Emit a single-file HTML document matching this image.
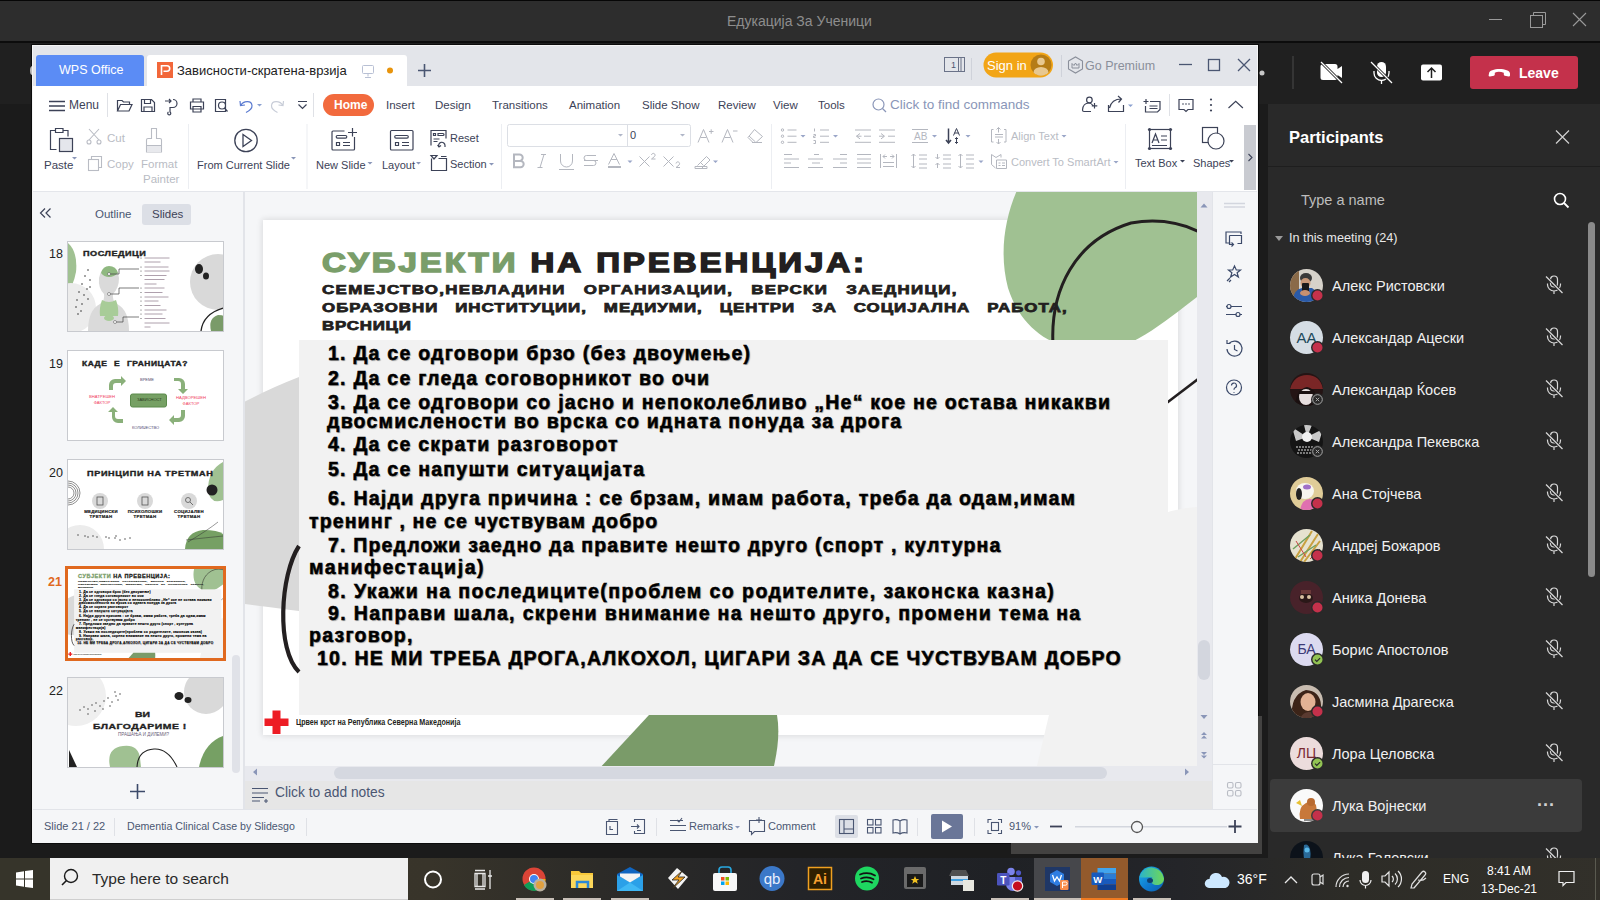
<!DOCTYPE html>
<html><head><meta charset="utf-8">
<style>
*{margin:0;padding:0;box-sizing:border-box}
html,body{width:1600px;height:900px;overflow:hidden;background:#1f1f1f;font-family:"Liberation Sans",sans-serif}
.a{position:absolute}
.t{position:absolute;white-space:nowrap;line-height:1}
svg{position:absolute;overflow:visible}
.li .t{font-size:19.5px;font-weight:bold;color:#000;letter-spacing:1.25px;-webkit-text-stroke:.5px #000;text-shadow:1px 1px 1px rgba(0,0,0,.35)}
#title{left:0;top:0;width:1600px;height:41px;background:#2d2d2d;border-top:1px solid #060606}
#tline{left:0;top:41px;width:1600px;height:2px;background:#0c0c0c}
#stage{left:0;top:43px;width:1600px;height:815px;background:#1b1b1b}
#panel{left:1268px;top:104px;width:332px;height:754px;background:#292929}
#wps{left:32px;top:45px;width:1226px;height:798px;background:#fff;border:1px solid #f4f4f4;overflow:hidden}
#taskbar{left:0;top:858px;width:1600px;height:42px;background:linear-gradient(90deg,#3b372b 0px,#38342a 430px,#2c2b28 600px,#232428 800px,#1f2125 1000px,#242529 1180px,#2d2c27 1350px,#32302a 1600px)}
.nm{color:#f0f0f0;font-size:14.5px}
.av{width:33px;height:33px;border-radius:50%}
.dot{width:12px;height:12px;border-radius:50%;background:#c4314b;border:2px solid #292929}
.ok{width:12px;height:12px;border-radius:50%;background:#6bb700;border:2px solid #292929}
.xs{width:12px;height:12px;border-radius:50%;background:#292929;border:1px solid #9a9a9a}
</style></head><body>
<div id="title" class="a"></div>
<div class="t" style="left:727px;top:14px;font-size:14px;color:#8e8e8e">Едукација За Ученици</div>
<svg style="left:0;top:0" width="1600" height="41">
 <line x1="1489" y1="19.5" x2="1502" y2="19.5" stroke="#9a9a9a" stroke-width="1"/>
 <rect x="1530.5" y="15.5" width="12" height="12" fill="none" stroke="#9a9a9a"/>
 <path d="M1533.5 15.5 V12.5 H1545.5 V24.5 H1542.5" fill="none" stroke="#9a9a9a"/>
 <path d="M1573 13 L1586 26 M1586 13 L1573 26" stroke="#9a9a9a" stroke-width="1.1"/>
</svg>
<div id="tline" class="a"></div>
<div id="stage" class="a"></div>
<div class="a" style="left:0;top:43px;width:1600px;height:61px;background:#202020"></div>
<div class="a" style="left:31px;top:44px;width:1228px;height:800px;background:#0c0c0c"></div>
<div class="a" style="left:30px;top:66px;width:5px;height:9px;border-radius:50%;background:#bdbdbd"></div>
<!-- WPS window -->
<div class="a" style="left:1257px;top:843px;width:5px;height:0px"></div>
<div id="wps" class="a"></div>
<div class="a" style="left:33px;top:46px;width:1224px;height:40px;background:#e3e5ea"></div>
<div class="a" style="left:36px;top:55px;width:108px;height:31px;background:#5b8cf5;border-radius:3px 3px 0 0"></div>
<div class="t" style="left:59px;top:64px;font-size:12.5px;color:#fff">WPS Office</div>
<div class="a" style="left:147px;top:55px;width:260px;height:31px;background:#fff;border-radius:3px 3px 0 0"></div>
<svg style="left:157px;top:62px" width="16" height="16"><rect width="16" height="16" fill="#f2673a"/><path d="M4.5 13 V3.8 H10 a2.7 2.7 0 0 1 0 5.4 H6.5" fill="none" stroke="#fff" stroke-width="1.6"/></svg>
<div class="t" style="left:177px;top:64px;font-size:13px;color:#222">Зависности-скратена-врзија</div>
<svg style="left:0;top:0" width="1600" height="200">
 <rect x="362.5" y="65.5" width="11" height="8" rx="1" fill="none" stroke="#b8c0d4" stroke-width="1"/>
 <path d="M368 73.5 v3 M365 77.5 h6" stroke="#b8c0d4" stroke-width="1"/>
 <circle cx="390" cy="70.5" r="3" fill="#e8940c"/>
 <path d="M424.5 64 v13 M418 70.5 h13" stroke="#4a5672" stroke-width="1.6"/>
 <!-- monitor icon right -->
 <rect x="944.5" y="57.5" width="20" height="14" fill="none" stroke="#6a7288" stroke-width="1"/>
 <text x="951" y="68" font-size="9" fill="#4a5672" font-family="Liberation Sans">1</text>
 <path d="M958.5 58 v13 M961 58 v13" stroke="#6a7288"/>
 <rect x="971" y="58" width="1" height="22" fill="#cfd2da"/>
 <!-- sign in -->
 <rect x="983.5" y="52.5" width="69.5" height="25" rx="12.5" fill="#f2a516"/>
 <circle cx="1041" cy="65" r="10.5" fill="#b57c16"/>
 <circle cx="1041" cy="61.5" r="3.8" fill="#e8c890"/>
 <path d="M1033.5 72.5 a7.5 5.5 0 0 1 15 0 a10.5 10.5 0 0 1-15 0z" fill="#e8c890"/>
 <rect x="1061" y="55" width="1" height="22" fill="#cfd2da"/>
 <path d="M1068.5 61 l7 -4 l7 4 v8 l-7 4 l-7-4z" fill="none" stroke="#8a8f9a" stroke-width="1.1"/>
 <path d="M1072 68 v-4.5 l2 2 l1.5-2.5 l1.5 2.5 l2-2 v4.5z" fill="none" stroke="#8a8f9a" stroke-width="1"/>
 <path d="M1179 64.5 h13" stroke="#4a5672" stroke-width="1.3"/>
 <rect x="1208.5" y="59.5" width="11" height="11" fill="none" stroke="#4a5672" stroke-width="1.3"/>
 <path d="M1238 59 L1250 71 M1250 59 L1238 71" stroke="#4a5672" stroke-width="1.3"/>
</svg>
<div class="t" style="left:987px;top:59px;font-size:13px;color:#fff">Sign in</div>
<div class="t" style="left:1085px;top:60px;font-size:12.5px;color:#8a8f9a">Go Premium</div>
<!-- ribbon -->
<div class="a" style="left:33px;top:86px;width:1224px;height:106px;background:#fff;border-bottom:1px solid #e4e6eb"></div>
<svg style="left:0;top:0" width="1600" height="200">
 <path d="M49 101.5 h16 M49 106 h16 M49 110.5 h16" stroke="#3c4257" stroke-width="1.3"/>
 <rect x="107" y="93" width="1" height="24" fill="#dfe1e6"/>
 <g fill="none" stroke="#3c4257" stroke-width="1.2">
  <path d="M117.5 111 v-10.5 h4.5 l1.5 1.5 h6 v2 M117.5 111 l3-6.5 h11.5 l-3 6.5z"/>
  <path d="M141.5 99.5 h10 l3 3 v9 h-13z M144.5 99.5 v4 h6 v-4 M144 111.5 v-4.5 h8 v4.5"/>
  <path d="M165 101 h6 m-2-2 l2 2 l-2 2 M173 99.5 a4 4 0 0 1 0 8 h-3 v4.5 a1.5 1.5 0 1 1-1.5 0"/>
  <path d="M190.5 102 h13 v7 h-13z M193 102 v-3 h8 v3 M193 106.5 h8 v5.5 h-8z"/>
  <path d="M215.5 99.5 h10 v12 h-10z M222 105.5 m-3.5 0 a3.5 3.5 0 1 0 7 0 a3.5 3.5 0 1 0-7 0 M224.5 108 l3 3.5"/>
 </g>
 <path d="M240.5 105.5 C243.5 100.5 251.5 100 252 105.5 C252.3 109 249 111 246 112.5 M240 101 l.5 4.5 l4.5-.5" fill="none" stroke="#5a7ad0" stroke-width="1.2"/>
 <path d="M257 104 l2.5 2.5 l2.5-2.5z" fill="#8aa0d0"/>
 <path d="M283 105.5 C280 100.5 272 100 271.5 105.5 C271.2 109 274.5 111 277.5 112.5 M283.5 101 l-.5 4.5 l-4.5-.5" fill="none" stroke="#c8cdd8" stroke-width="1.2"/>
 <path d="M298 101.5 h9 M298.5 104.5 l4 4 l4-4" fill="none" stroke="#3c4257" stroke-width="1.2"/>
 <rect x="313" y="93" width="1" height="24" fill="#dfe1e6"/>
 <rect x="323" y="94" width="51" height="22" rx="11" fill="#f26a3d"/>
 <!-- right icons row -->
<g fill="none" stroke="#3c4257" stroke-width="1.2">
  <circle cx="1089.4" cy="100" r="2.8"/>
  <path d="M1093 105.5 q-2-2.5-4-2.5 q-6 0-6.5 7 q0 1.5 1.5 1.5 h7 M1094.5 103 v5.5 M1091.8 105.8 h5.5"/>
  <path d="M1108.5 105 v6.5 h15 v-6.5 M1109.5 108 q2-9 12-9 M1118 96 l3.5 3 l-3 3.5"/>
  <path d="M1146 99 v5 M1143.5 101.5 h5 M1150 101.5 h10 v8 l-2.5 2.5 h-12 v-6 M1149.5 106 h8 M1149.5 108.5 h8"/>
  <path d="M1179 99.5 h14 v10 h-5 l-2 2 l-2-2 h-5z"/>
 </g>
 <path d="M1128 104.5 l2.5 2.5 l2.5-2.5z" fill="#8aa0d0"/>
 <rect x="1169" y="94" width="1" height="22" fill="#dfe1e6"/>
 <circle cx="1183" cy="104" r=".8" fill="#3c4257"/><circle cx="1186" cy="104" r=".8" fill="#3c4257"/><circle cx="1189" cy="104" r=".8" fill="#3c4257"/>
 <circle cx="1211" cy="99.5" r="1.1" fill="#3c4257"/><circle cx="1211" cy="105" r="1.1" fill="#3c4257"/><circle cx="1211" cy="110.5" r="1.1" fill="#3c4257"/>
 <path d="M1228.5 108 l7.2-6.7 l7.2 6.7" fill="none" stroke="#3c4257" stroke-width="1.2"/>
 <circle cx="878.5" cy="104.5" r="5.5" fill="none" stroke="#8a96b8" stroke-width="1.2"/>
 <line x1="882.5" y1="108.5" x2="886" y2="112" stroke="#8a96b8" stroke-width="1.3"/>
</svg>
<div class="t" style="left:69px;top:99px;font-size:12px;color:#3c4257">Menu</div>
<div class="t" style="left:334px;top:99px;font-size:12px;font-weight:bold;color:#fff">Home</div>
<div class="t" style="left:386px;top:100px;font-size:11.5px;color:#3c4257">Insert</div>
<div class="t" style="left:435px;top:100px;font-size:11.5px;color:#3c4257">Design</div>
<div class="t" style="left:492px;top:100px;font-size:11.5px;color:#3c4257">Transitions</div>
<div class="t" style="left:569px;top:100px;font-size:11.5px;color:#3c4257">Animation</div>
<div class="t" style="left:642px;top:100px;font-size:11.5px;color:#3c4257">Slide Show</div>
<div class="t" style="left:718px;top:100px;font-size:11.5px;color:#3c4257">Review</div>
<div class="t" style="left:773px;top:100px;font-size:11.5px;color:#3c4257">View</div>
<div class="t" style="left:818px;top:100px;font-size:11.5px;color:#3c4257">Tools</div>
<div class="t" style="left:890px;top:98px;font-size:13.5px;color:#8a96b8">Click to find commands</div>
<!-- ribbon row icons -->
<svg style="left:0;top:0" width="1600" height="200">
 <g fill="none" stroke="#3c4257" stroke-width="1.2">
  <path d="M55.5 130.5 h-5 v19 h6 M63 130.5 h5 v6 M55.5 128.5 h7.5 v4 h-7.5z"/>
  <rect x="59.5" y="138.5" width="13" height="13" fill="#e4e6ec"/>
 </g>
 <g fill="none" stroke="#b9bcc4" stroke-width="1.1">
  <path d="M89 129 l10 11 M99 129 l-10 11"/><circle cx="89" cy="142" r="2"/><circle cx="99" cy="142" r="2"/>
  <rect x="88.5" y="159.5" width="10" height="11"/><path d="M91.5 159.5 v-3 h10 v11 h-3"/>
  <path d="M151.5 128.5 h5 v10 h3.5 a1.5 1.5 0 0 1 1.5 1.5 v12 h-15 v-12 a1.5 1.5 0 0 1 1.5-1.5 h3.5z M146.5 145.5 h15"/>
 </g>
 <rect x="147" y="146" width="14" height="6" fill="#e8e9ed"/>
 <circle cx="246" cy="140.5" r="11.2" fill="none" stroke="#3c4257" stroke-width="1.3"/>
 <path d="M243 134.5 v12 l8.5-6z" fill="none" stroke="#3c4257" stroke-width="1.3"/>
 <rect x="188" y="124" width="1" height="65" fill="#eceef2"/>
 <rect x="306.5" y="124" width="1" height="65" fill="#eceef2"/>
 <g fill="none" stroke="#3c4257" stroke-width="1.2">
  <path d="M344.5 131 h-11.5 a1 1 0 0 0-1 1 v17 a1 1 0 0 0 1 1 h20.5 a1 1 0 0 0 1-1 v-12 M337.5 135.5 h8 a1.3 1.3 0 0 1 0 2.6 h-8 a1.3 1.3 0 0 1 0-2.6z M336.5 142.5 h3 v3 h-3z M343 142.5 h7 M343 145.5 h7 M352.5 128 v8.5 M348 132.5 h9"/>
  <rect x="390.5" y="130.5" width="22.5" height="19.5" rx="1"/>
  <path d="M396 135.5 h11 a1.3 1.3 0 0 1 0 2.6 h-11 a1.3 1.3 0 0 1 0-2.6z M395.5 142.5 h3 v3 h-3z M402 142.5 h7 M402 145.5 h7"/>
  <path d="M431 145.5 v-15 h15 v8 M433.5 133.5 h2 v2 h-2z M438 133.5 h5 a1 1 0 0 1 0 2 h-5z M433.5 139 h6 M433.5 141.5 h4 M439 147 a3.2 3.2 0 1 1 6 -1.5 v1.5 M437.5 145 l1.5 2 l2-1.5"/>
  <path d="M431.5 158.5 v12 h15 v-12 h-8 M441 156.5 h5.5 M431 155.5 h6 l-3 3.5z"/>
 </g>
 <path d="M367.5 162 l2.5 2.5 l2.5-2.5z M416 162 l2.5 2.5 l2.5-2.5z M489 163 l2.5 2.5 l2.5-2.5z M72 157 l2.5 2.5 l2.5-2.5z M291 157 l2.5 2.5 l2.5-2.5z" fill="#8a96b8"/>
 <rect x="501" y="124" width="1" height="65" fill="#eceef2"/>
 <rect x="507.5" y="124.5" width="183" height="22" rx="2" fill="#fff" stroke="#dcdfe5"/>
 <rect x="627" y="125" width="1" height="21" fill="#dcdfe5"/>
 <path d="M618 134 l2.5 2.5 l2.5-2.5z M680 134 l2.5 2.5 l2.5-2.5z" fill="#b0b6c8"/>
<g fill="none" stroke="#b4b7bf" stroke-width="1">
  <path d="M514 154.5 h5.5 a3.2 3.2 0 0 1 0 6.4 h-5.5z M514 160.9 h6.5 a3.2 3.2 0 0 1 0 6.4 h-6.5z" stroke-width="2"/>
  <path d="M541 154.5 h5 M537.5 167.5 h5 M544 154.5 l-4 13"/>
  <path d="M560.5 154 v7 a6 6 0 0 0 12 0 v-7 M559 169.5 h15"/>
  <path d="M596 155.5 h-9.5 a2.5 2.5 0 0 0 0 5 h7 a2.5 2.5 0 0 1 0 5 h-9.5 M584 160.5 h14"/>
  <path d="M608.5 164.5 l5.5-11 l5.5 11 M611 159.5 h6"/><rect x="608" y="166" width="13" height="2" fill="#b4b7bf" stroke="none"/>
  <path d="M639.5 156.5 l10 10 M649.5 156.5 l-10 10 M651.5 155 a1.8 1.8 0 1 1 3 1.5 l-3 2.5 h4"/>
  <path d="M663.5 156.5 l10 10 M673.5 156.5 l-10 10 M676 163.5 a1.8 1.8 0 1 1 3 1.5 l-3 2.5 h4"/>
  <path d="M697.5 165.5 l9-9 l3.5 3.5 l-9 9 M695 166.5 h12 v2 h-12z M700 162 l3.5 3.5"/>
  <path d="M698 142.5 l5.5-13 l5.5 13 M700.5 137.5 h6 M709 131.5 h4.5 M711.2 129.3 v4.5"/>
  <path d="M722 142.5 l5.5-13 l5.5 13 M724.5 137.5 h6 M733 131 h4.5"/>
  <path d="M754.5 129.5 l8 7 l-6.5 6 h-3 l-5-5z M749 136 l6.5 6 M752 142.5 h10"/>
  <circle cx="782.5" cy="130" r="1.2"/><circle cx="782.5" cy="136.2" r="1.2"/><circle cx="782.5" cy="142.3" r="1.2"/>
  <path d="M787.5 130 h9 M787.5 136.2 h9 M787.5 142.3 h9"/>
  <path d="M820 130 h9 M820 136.2 h9 M820 142.3 h9 M814.5 128.5 v3 M813.5 134.5 h2 v1.5 h-2 v1.5 h2 M813.5 140.5 h2 v3 h-2"/>
  <path d="M855 130 h16 M864 136.2 h7 M855 142.3 h16 M860 133.5 l-3.5 2.7 l3.5 2.7 M856.5 136.2 h5"/>
  <path d="M879 130 h16 M888 136.2 h7 M879 142.3 h16 M881 133.5 l3.5 2.7 l-3.5 2.7 M879 136.2 h5"/>
  <path d="M912 129.5 h16 M912 142.5 h16"/>
  <path d="M784 154.5 h8 M784 159 h15 M784 163 h7 M784 167.5 h15"/>
  <path d="M814 154.5 h5 M808 159 h15 M812 163 h8 M808 167.5 h15"/>
  <path d="M840 154.5 h7 M833 159 h14 M840 163 h7 M833 167.5 h14"/>
  <path d="M857 154.5 h14 M857 159 h14 M857 163 h14 M857 167.5 h14"/>
  <path d="M880.5 154 v14 M896.5 154 v14 M883 162.5 h11 M883 166.5 h11 M883 156.5 h4 M890 156.5 h4 M885 154.5 l-2 2 l2 2 M892 154.5 l2 2 l-2 2"/>
  <path d="M913.5 154 v14 M911.5 156 l2-2 l2 2 M911.5 166 l2 2 l2-2 M919 155 h8 M919 159 h8 M919 164 h8 M919 168 h8"/>
  <path d="M937.5 154 v5 M937.5 163 v5 M935.5 157 l2 2 l2-2 M935.5 165 l2-2 l2 2 M943 155 h8 M943 159 h8 M943 164 h8 M943 168 h8"/>
  <path d="M960.5 154 v14 M958.5 156 l2-2 l2 2 M958.5 166 l2 2 l2-2 M966 155 h8 M966 159 h8 M966 164 h8 M966 168 h8"/>
  <path d="M991.5 129.5 h-0 v12.5 M991.5 129.5 h2 M991.5 142 h2 M1006 129.5 v12.5 M1006 129.5 h-2 M1006 142 h-2 M998.5 127.5 v5 M998.5 139 v5 M996.5 129.5 l2-2 l2 2 M996.5 142 l2 2 l2-2 M995 134.5 h8 M995 137 h8"/>
  <path d="M991.5 154.5 v10 l4 3.5 M991.5 154.5 l4.5 3 l5-3 v3 M996.5 160 h10 v8.5 h-10z M998.5 163 h2 M1002 163 h3 M998.5 165.5 h2 M1002 165.5 h3"/>
 </g>
 <path d="M948.5 128.5 v14 M946 140 l2.5 3 l2.5-3" fill="none" stroke="#3c4257" stroke-width="1.5"/>
 <path d="M953.5 135.5 l3-7 l3 7 M954.5 133 h4 M956.5 137.5 v6 M955 139 l1.5-1.5 l1.5 1.5 M955 142 l1.5 1.5 l1.5-1.5" fill="none" stroke="#3c4257" stroke-width="1"/>
 <text x="914" y="140" font-size="10" fill="#b4b7bf" font-family="Liberation Sans">AB</text>
 <rect x="771" y="124" width="1" height="65" fill="#eceef2"/>
 <rect x="906" y="124" width="1" height="0" fill="#eceef2"/>
 <path d="M627.5 160.5 l2.5 2.5 l2.5-2.5z M713 160.5 l2.5 2.5 l2.5-2.5z M800.5 135 l2.5 2.5 l2.5-2.5z M833 135 l2.5 2.5 l2.5-2.5z M932 135 l2.5 2.5 l2.5-2.5z M965.5 135 l2.5 2.5 l2.5-2.5z M978.5 160.5 l2.5 2.5 l2.5-2.5z M1061.5 135 l2.5 2.5 l2.5-2.5z M1113.5 161 l2.5 2.5 l2.5-2.5z" fill="#9aa6c8"/>
 <rect x="1125" y="124" width="1" height="65" fill="#eceef2"/>
 <g fill="none" stroke="#3c4257" stroke-width="1.2">
  <rect x="1149.5" y="129.5" width="21" height="19"/>
  <path d="M1152 143 l3.5-9 l3.5 9 M1153 140 h5 M1161 136 h6 M1161 140 h6 M1152 145.5 h15"/>
  <rect x="1202.5" y="127.5" width="15" height="15"/>
  <circle cx="1216" cy="141" r="8" fill="#fff"/>
 </g>
 <g fill="#3c4257"><circle cx="1149.5" cy="129.5" r="1.6"/><circle cx="1170.5" cy="129.5" r="1.6"/><circle cx="1149.5" cy="148.5" r="1.6"/><circle cx="1170.5" cy="148.5" r="1.6"/></g>
 <path d="M1180 160 l2.5 2.5 l2.5-2.5z M1229 160 l2.5 2.5 l2.5-2.5z" fill="#3c4257"/>
 <rect x="1244" y="125" width="12" height="65" fill="#c9cbd1"/>
 <path d="M1248.5 154 l3.5 3.5 l-3.5 3.5" fill="none" stroke="#3c4257" stroke-width="1.1"/>
</svg>
<div class="t" style="left:44px;top:160px;font-size:11.5px;color:#3c4257">Paste</div>
<div class="t" style="left:107px;top:133px;font-size:11.5px;color:#b9bcc4">Cut</div>
<div class="t" style="left:107px;top:159px;font-size:11.5px;color:#b9bcc4">Copy</div>
<div class="t" style="left:141px;top:159px;font-size:11.5px;color:#b9bcc4">Format</div>
<div class="t" style="left:143px;top:173.5px;font-size:11.5px;color:#b9bcc4">Painter</div>
<div class="t" style="left:197px;top:160px;font-size:11px;color:#3c4257">From Current Slide</div>
<div class="t" style="left:316px;top:160px;font-size:11px;color:#3c4257">New Slide</div>
<div class="t" style="left:382px;top:160px;font-size:11px;color:#3c4257">Layout</div>
<div class="t" style="left:450px;top:133px;font-size:11px;color:#3c4257">Reset</div>
<div class="t" style="left:450px;top:159px;font-size:11px;color:#3c4257">Section</div>
<div class="t" style="left:630px;top:130px;font-size:11px;color:#3c4257">0</div>
<div class="t" style="left:1011px;top:131px;font-size:11px;color:#b9bcc4">Align Text</div>
<div class="t" style="left:1011px;top:157px;font-size:11px;color:#b9bcc4">Convert To SmartArt</div>
<div class="t" style="left:1135px;top:158px;font-size:11px;color:#3c4257">Text Box</div>
<div class="t" style="left:1193px;top:158px;font-size:11px;color:#3c4257">Shapes</div>
<!-- left panel -->
<div class="a" style="left:33px;top:192px;width:211px;height:617px;background:#f5f6f8"></div>
<div class="a" style="left:243px;top:192px;width:2px;height:617px;background:#e2e4e9"></div>
<svg style="left:0;top:0" width="300" height="820">
 <path d="M45 208.5 l-4.5 4.5 l4.5 4.5 M50.5 208.5 l-4.5 4.5 l4.5 4.5" fill="none" stroke="#3c4257" stroke-width="1.2"/>
 <rect x="142" y="204" width="49" height="21" rx="3" fill="#dcdfe6"/>
 <rect x="232" y="655" width="8" height="118" rx="4" fill="#e0e2e8"/>
 <path d="M137.5 784 v15 M130 791.5 h15" stroke="#3c4a6a" stroke-width="1.6"/>
</svg>
<div class="t" style="left:95px;top:209px;font-size:11.5px;color:#4a5672">Outline</div>
<div class="t" style="left:152px;top:209px;font-size:11.5px;color:#3c4257">Slides</div>
<div id="thumbs">
<div class="t" style="left:49px;top:248px;font-size:12.5px;color:#222">18</div>
<div class="t" style="left:49px;top:358px;font-size:12.5px;color:#222">19</div>
<div class="t" style="left:49px;top:467px;font-size:12.5px;color:#222">20</div>
<div class="t" style="left:48px;top:576px;font-size:12.5px;font-weight:bold;color:#e0691f">21</div>
<div class="t" style="left:49px;top:685px;font-size:12.5px;color:#222">22</div>
<!-- thumb 18 -->
<div class="a" style="left:67px;top:241px;width:157px;height:91px;border:1px solid #c8cacf;background:#fff;overflow:hidden">
 <svg style="left:0;top:0" width="155" height="89">
  <path d="M0 1 Q10 10 8 30 Q5 45 0 48z" fill="#a0c192"/>
  <circle cx="3" cy="66" r="25" fill="#ececec"/>
  <g fill="#333"><circle cx="20" cy="28" r=".8"/><circle cx="17" cy="34" r=".8"/><circle cx="22" cy="38" r=".8"/><circle cx="14" cy="42" r=".8"/><circle cx="19" cy="47" r=".8"/><circle cx="11" cy="50" r=".8"/><circle cx="16" cy="53" r=".8"/><circle cx="9" cy="58" r=".8"/><circle cx="14" cy="62" r=".8"/><circle cx="20" cy="57" r=".8"/><circle cx="8" cy="65" r=".8"/><circle cx="13" cy="69" r=".8"/><circle cx="22" cy="45" r=".8"/><circle cx="10" cy="72" r=".8"/></g>
  <path d="M20 89 Q20 68 32 62 Q37 59 36 52 Q30 46 31 36 Q33 25 41 25 Q50 25 51 36 Q51 46 45 52 Q44 59 49 62 Q61 68 61 89z" fill="#dadada"/>
  <path d="M33 31 Q35 24 41 24 Q48 24 50 31 Q46 35 41 35 Q36 35 33 31z" fill="#8fb880"/>
  <path d="M34 58 Q31 66 32 74 h18 Q51 66 48 58 Q41 62 34 58z" fill="#a8cc98"/>
  <ellipse cx="41" cy="76" rx="5" ry="3" fill="#a8cc98"/>
  <path d="M41 32 h10 v-5 h20 M41 52 h10 v-6 h20 M47 80 h8 v-5 h16" fill="none" stroke="#444" stroke-width=".7"/>
  <circle cx="41" cy="32" r="1.5" fill="#fff" stroke="#444" stroke-width=".5"/><circle cx="41" cy="52" r="1.5" fill="#fff" stroke="#444" stroke-width=".5"/><circle cx="47" cy="80" r="1.5" fill="#fff" stroke="#444" stroke-width=".5"/>
  <g fill="none" stroke="#9a8898" stroke-width=".8"><path d="M76.5 16 h25 M76.5 20 h16 M76.5 25 h24 M76.5 29 h25 M76.5 33.5 h22 M76.5 37.5 h20 M76.5 42 h12 M76.5 46 h20 M76.5 50.5 h18 M76.5 55 h24 M76.5 59 h14 M76.5 63.5 h16 M76.5 68 h22 M76.5 72 h18 M76.5 76.5 h21 M76.5 81 h25 M76.5 85 h6"/></g><g fill="#555"><circle cx="73" cy="16" r=".6"/><circle cx="73" cy="25" r=".6"/><circle cx="73" cy="29" r=".6"/><circle cx="73" cy="33.5" r=".6"/><circle cx="73" cy="46" r=".6"/><circle cx="73" cy="50.5" r=".6"/><circle cx="73" cy="55" r=".6"/><circle cx="73" cy="59" r=".6"/><circle cx="73" cy="63.5" r=".6"/><circle cx="73" cy="68" r=".6"/><circle cx="73" cy="72" r=".6"/><circle cx="73" cy="76.5" r=".6"/></g>
  <circle cx="150" cy="40" r="28" fill="#d9d9d9"/>
  <ellipse cx="131" cy="27" rx="4" ry="5" fill="#222"/><ellipse cx="138" cy="34" rx="3" ry="3.5" fill="#222"/>
  <path d="M133 89 Q135 72 155 66" fill="none" stroke="#222" stroke-width="1.3"/>
  <path d="M143 89 Q140 76 150 73 Q155 73 155 74 V89z" fill="#7a9b69"/>
 </svg>
 <div class="t" style="-webkit-text-stroke:.35px #222;left:15px;top:8px;font-size:7px;font-weight:bold;color:#222;transform:scaleX(1.3);transform-origin:0 0;letter-spacing:.4px">ПОСЛЕДИЦИ</div>
</div>
<!-- thumb 19 -->
<div class="a" style="left:67px;top:350px;width:157px;height:91px;border:1px solid #c8cacf;background:#fff;overflow:hidden">
 <svg style="left:0;top:0" width="155" height="89">
  <path d="M41 39 v-5 a6 6 0 0 1 6-6 h6 v-3 l5 5 l-5 5 v-3 h-5 a3 3 0 0 0-3 3 v4z" fill="#8ab07a"/>
  <path d="M106 27 h5 a6 6 0 0 1 6 6 v5 h3 l-5 5 l-5-5 h3 v-5 a3 3 0 0 0-3-3 h-4z" fill="#8ab07a"/>
  <path d="M44 61 v5 a6 6 0 0 0 6 6 h5 v-4 h-5 a3 3 0 0 1-3-3 v-4 h3 l-5-5 l-5 5z" fill="#8ab07a"/>
  <path d="M117 59 v6 a6 6 0 0 1-6 6 h-5 v3 l-5-5 l5-5 v3 h4 a3 3 0 0 0 3-3 v-5z" fill="#8ab07a"/>
  <rect x="62.5" y="43" width="36" height="13" rx="2" fill="#76a064" stroke="#5a8a4a"/>
 </svg>
 <div class="t" style="-webkit-text-stroke:.35px #222;left:14px;top:10px;font-size:6.5px;font-weight:bold;color:#222;transform:scaleX(1.3);transform-origin:0 0;letter-spacing:.4px;word-spacing:3px">КАДЕ Е ГРАНИЦАТА?</div>
 <div class="t" style="left:72px;top:27px;font-size:4px;color:#504870">ВРЕМЕ</div>
 <div class="t" style="left:64px;top:75px;font-size:4px;color:#504870">КОЛИЧЕСТВО</div>
 <div class="t" style="left:69px;top:47px;font-size:4px;color:#2a3a20">ЗАВИСНОСТ</div>
 <div class="t" style="left:21px;top:43px;font-size:4.2px;color:#f04060;text-align:center;line-height:5.5px">ВНАТРЕШЕН<br>ФАКТОР</div>
 <div class="t" style="left:108px;top:44px;font-size:4.2px;color:#f04060;text-align:center;line-height:5.5px">НАДВОРЕШЕН<br>ФАКТОР</div>
</div>
<!-- thumb 20 -->
<div class="a" style="left:67px;top:459px;width:157px;height:91px;border:1px solid #c8cacf;background:#fff;overflow:hidden">
 <svg style="left:0;top:0" width="155" height="89">
  <path d="M155 2 Q140 10 140 30 Q142 45 155 40z" fill="#a0c192"/>
  <circle cx="144" cy="30" r="5.5" fill="#222"/>
  <g fill="none" stroke="#444" stroke-width=".6"><circle cx="0" cy="33" r="12"/><circle cx="0" cy="33" r="10"/><circle cx="0" cy="33" r="8"/><circle cx="0" cy="33" r="6"/></g>
  <circle cx="32" cy="41" r="8" fill="#d9d9d9"/><circle cx="77" cy="41" r="8" fill="#d9d9d9"/><circle cx="121" cy="41" r="8" fill="#d9d9d9"/>
  <rect x="29" y="37" width="6" height="8" fill="none" stroke="#555" stroke-width=".8"/>
  <rect x="74" y="37" width="6" height="8" fill="none" stroke="#555" stroke-width=".8"/>
  <circle cx="120" cy="40" r="2.5" fill="none" stroke="#555" stroke-width=".8"/><path d="M122 42 l3 3" stroke="#555" stroke-width=".8"/>
  <circle cx="12" cy="89" r="24" fill="#ececec"/>
  <g fill="#333"><circle cx="10" cy="75" r=".7"/><circle cx="17" cy="76" r=".7"/><circle cx="20" cy="77" r=".7"/><circle cx="29" cy="77" r=".7"/><circle cx="38" cy="77" r=".7"/><circle cx="41" cy="78" r=".7"/><circle cx="47" cy="78" r=".7"/><circle cx="52" cy="80" r=".7"/><circle cx="57" cy="79" r=".7"/><circle cx="62" cy="78" r=".7"/><circle cx="25" cy="76" r=".7"/><circle cx="48" cy="76" r=".7"/></g>
  <path d="M117 89 Q118 72 135 70 Q150 70 155 74 V89z" fill="#76a064"/>
  <path d="M118 80 Q135 78 155 76 M120 82 Q140 70 150 62" fill="none" stroke="#333" stroke-width=".5"/>
 </svg>
 <div class="t" style="-webkit-text-stroke:.35px #222;left:19px;top:10px;font-size:7px;font-weight:bold;color:#222;transform:scaleX(1.3);transform-origin:0 0;letter-spacing:.5px">ПРИНЦИПИ НА ТРЕТМАН</div>
 <div class="t" style="left:15px;top:49px;width:36px;font-size:4.3px;font-weight:bold;color:#222;text-align:center;line-height:5px;letter-spacing:.3px;-webkit-text-stroke:.2px #222">МЕДИЦИНСКИ<br>ТРЕТМАН</div>
 <div class="t" style="left:59px;top:49px;width:36px;font-size:4.3px;font-weight:bold;color:#222;text-align:center;line-height:5px;letter-spacing:.3px;-webkit-text-stroke:.2px #222">ПСИХОЛОШКИ<br>ТРЕТМАН</div>
 <div class="t" style="left:103px;top:49px;width:36px;font-size:4.3px;font-weight:bold;color:#222;text-align:center;line-height:5px;letter-spacing:.3px;-webkit-text-stroke:.2px #222">СОЦИЈАЛЕН<br>ТРЕТМАН</div>
</div>
<!-- thumb 22 -->
<div class="a" style="left:67px;top:677px;width:157px;height:91px;border:1px solid #c8cacf;background:#fff;overflow:hidden">
 <svg style="left:0;top:0" width="155" height="89">
  <circle cx="8" cy="18" r="30" fill="#efefef"/>
  <circle cx="138" cy="14" r="22" fill="#d9d9d9"/>
  <ellipse cx="111" cy="18" rx="4.5" ry="4" fill="#222"/><ellipse cx="120" cy="22" rx="3.5" ry="3" fill="#222"/>
  <g fill="#333"><circle cx="12" cy="32" r=".7"/><circle cx="16" cy="29" r=".7"/><circle cx="20" cy="31" r=".7"/><circle cx="24" cy="27" r=".7"/><circle cx="28" cy="25" r=".7"/><circle cx="32" cy="28" r=".7"/><circle cx="36" cy="23" r=".7"/><circle cx="40" cy="20" r=".7"/><circle cx="44" cy="24" r=".7"/><circle cx="48" cy="18" r=".7"/><circle cx="50" cy="22" r=".7"/><circle cx="20" cy="36" r=".7"/><circle cx="27" cy="33" r=".7"/><circle cx="35" cy="31" r=".7"/><circle cx="42" cy="28" r=".7"/><circle cx="47" cy="14" r=".7"/><circle cx="52" cy="16" r=".7"/></g>
  <path d="M42 89 Q38 70 55 68 Q70 66 72 80 L73 89z" fill="#a0c192"/>
  <path d="M69 89 Q70 72 86 71 Q100 70 109 89" fill="none" stroke="#222" stroke-width="1.1"/>
  <path d="M131 89 Q136 65 155 58 V89z" fill="#76a064"/>
  <path d="M1 72 L9 89 H1z" fill="#222"/>
 </svg>
 <div class="t" style="-webkit-text-stroke:.35px #222;left:67px;top:33px;font-size:8px;font-weight:bold;color:#222;transform:scaleX(1.3);transform-origin:0 0">ВИ</div>
 <div class="t" style="-webkit-text-stroke:.35px #222;left:25px;top:45px;font-size:8px;font-weight:bold;color:#222;transform:scaleX(1.3);transform-origin:0 0;letter-spacing:.4px">БЛАГОДАРИМЕ !</div>
 <div class="t" style="left:50px;top:55px;font-size:4.5px;color:#6a6078">ПРАШАЊА И ДИЛЕМИ?</div>
</div>
<div class="a" style="left:65px;top:566px;width:161px;height:95px;border:3px solid #e0691f;background:#fff"></div>
<div class="a" style="left:68px;top:569px;width:155px;height:89px;overflow:hidden;background:#fff">
<div class="a" style="left:0;top:0;width:915px;height:515px;transform:scale(0.1694);transform-origin:0 0">
<div class="a" style="left:-263px;top:-220px;width:1600px;height:900px">
 <div class="a" style="left:263px;top:220px;width:915px;height:515px;background:#fff;box-shadow:0 0 6px 1px rgba(0,0,0,.11)"></div>
 <svg style="left:0;top:0" width="1600" height="900">
  <path d="M200 430 Q240 400 299 377 L310 377 L310 612 L299 611 Q260 606 200 598 Z" fill="#d9d9d9"/>
  <path d="M1022 180 C1006 210 998 250 1008 288 C1020 325 1045 345 1085 352 C1125 356 1160 325 1197 297 L1197 180 Z" fill="#a0c192"/>
  <path d="M1053 345 C1050 290 1075 240 1131 223 C1160 218 1185 222 1210 238" fill="none" stroke="#231f20" stroke-width="3"/>
  <path d="M1160 408 L1210 370" fill="none" stroke="#231f20" stroke-width="2.5"/>
  <path d="M1160 515 Q1180 507 1200 507 L1200 770 L1036 770 L1049 715 L1100 600 Z" fill="#f2f2f2"/>
  <rect x="299" y="340" width="869" height="375" fill="#f2f2f2"/>
  <path d="M299 546 C280 575 276 650 299 672" fill="none" stroke="#231f20" stroke-width="4.2"/>
  <path d="M649 715 L777 715 Q781 738 773 770 L598 770 Z" fill="#7a9b69"/>
  <path d="M264.5 718.5 h8 v-8 h8 v8 h8 v7.5 h-8 v8 h-8 v-8 h-8z" fill="#ed1c24"/>
 </svg>
 <div class="t" style="left:322px;top:249px;font-size:27.5px;font-weight:bold;color:#231f20;-webkit-text-stroke:1.5px currentColor;transform:scaleX(1.2);transform-origin:0 0;letter-spacing:2.45px"><span style="color:#7a9e6a;-webkit-text-stroke:1.5px #7a9e6a">СУБЈЕКТИ</span> НА ПРЕВЕНЦИЈА:</div>
 <div class="t" style="left:322px;top:284px;font-size:12.5px;font-weight:bold;color:#231f20;-webkit-text-stroke:.75px #231f20;transform:scaleX(1.35);transform-origin:0 0;letter-spacing:1px;word-spacing:8.8px">СЕМЕЈСТВО,НЕВЛАДИНИ ОРГАНИЗАЦИИ, ВЕРСКИ ЗАЕДНИЦИ,</div>
 <div class="t" style="left:322px;top:302px;font-size:12.5px;font-weight:bold;color:#231f20;-webkit-text-stroke:.75px #231f20;transform:scaleX(1.35);transform-origin:0 0;letter-spacing:.75px;word-spacing:8.3px">ОБРАЗОВНИ ИНСТИТУЦИИ, МЕДИУМИ, ЦЕНТРИ ЗА СОЦИЈАЛНА РАБОТА,</div>
 <div class="t" style="left:322px;top:320px;font-size:12.5px;font-weight:bold;color:#231f20;-webkit-text-stroke:.75px #231f20;transform:scaleX(1.35);transform-origin:0 0;letter-spacing:.6px">ВРСНИЦИ</div>
 <div class="li a" style="left:0;top:2px">
  <div class="t" style="left:328px;top:342px">1. Да се одговори брзо (без двоумење)</div>
  <div class="t" style="left:328px;top:367px">2. Да се гледа соговорникот во очи</div>
  <div class="t" style="left:328px;top:391px">3. Да се одговори со јасно и непоколебливо „Не“ кое не остава никакви</div>
  <div class="t" style="left:327px;top:410px">двосмислености во врска со идната понуда за дрога</div>
  <div class="t" style="left:328px;top:433px">4. Да се скрати разговорот</div>
  <div class="t" style="left:328px;top:458px">5. Да се напушти ситуацијата</div>
  <div class="t" style="left:328px;top:487px">6. Најди друга причина : се брзам, имам работа, треба да одам,имам</div>
  <div class="t" style="left:309px;top:510px;letter-spacing:1.13px">тренинг , не се чуствувам добро</div>
  <div class="t" style="left:328px;top:534px;letter-spacing:1.19px">7. Предложи заедно да правите нешто друго (спорт , културна</div>
  <div class="t" style="left:309px;top:556px;letter-spacing:1.57px">манифестација)</div>
  <div class="t" style="left:328px;top:580px;letter-spacing:1.45px">8. Укажи на последиците(проблем со родителите, законска казна)</div>
  <div class="t" style="left:328px;top:602px;letter-spacing:1.35px">9. Направи шала, скрени внимание на нешто друго, промени тема на</div>
  <div class="t" style="left:309px;top:624px">разговор,</div>
  <div class="t" style="left:317px;top:647px">10. НЕ МИ ТРЕБА ДРОГА,АЛКОХОЛ, ЦИГАРИ ЗА ДА СЕ ЧУСТВУВАМ ДОБРО</div>
 </div>
 <div class="t" style="left:296px;top:718px;font-size:8.5px;font-weight:bold;color:#231f20;transform:scaleX(.84);transform-origin:0 0">Црвен крст на Република Северна Македонија</div>

</div></div></div></div>
<!-- canvas -->
<div class="a" style="left:245px;top:192px;width:952px;height:574px;background:#f5f6f8;overflow:hidden">
 <div class="a" style="left:-245px;top:-192px;width:1600px;height:900px">
 <div class="a" style="left:263px;top:220px;width:915px;height:515px;background:#fff;box-shadow:0 0 6px 1px rgba(0,0,0,.11)"></div>
 <svg style="left:0;top:0" width="1600" height="900">
  <path d="M200 430 Q240 400 299 377 L310 377 L310 612 L299 611 Q260 606 200 598 Z" fill="#d9d9d9"/>
  <path d="M1022 180 C1006 210 998 250 1008 288 C1020 325 1045 345 1085 352 C1125 356 1160 325 1197 297 L1197 180 Z" fill="#a0c192"/>
  <path d="M1053 345 C1050 290 1075 240 1131 223 C1160 218 1185 222 1210 238" fill="none" stroke="#231f20" stroke-width="3"/>
  <path d="M1160 408 L1210 370" fill="none" stroke="#231f20" stroke-width="2.5"/>
  <path d="M1160 515 Q1180 507 1200 507 L1200 770 L1036 770 L1049 715 L1100 600 Z" fill="#f2f2f2"/>
  <rect x="299" y="340" width="869" height="375" fill="#f2f2f2"/>
  <path d="M299 546 C280 575 276 650 299 672" fill="none" stroke="#231f20" stroke-width="4.2"/>
  <path d="M649 715 L777 715 Q781 738 773 770 L598 770 Z" fill="#7a9b69"/>
  <path d="M264.5 718.5 h8 v-8 h8 v8 h8 v7.5 h-8 v8 h-8 v-8 h-8z" fill="#ed1c24"/>
 </svg>
 <div class="t" style="left:322px;top:249px;font-size:27.5px;font-weight:bold;color:#231f20;-webkit-text-stroke:1.5px currentColor;transform:scaleX(1.2);transform-origin:0 0;letter-spacing:2.45px"><span style="color:#7a9e6a;-webkit-text-stroke:1.5px #7a9e6a">СУБЈЕКТИ</span> НА ПРЕВЕНЦИЈА:</div>
 <div class="t" style="left:322px;top:284px;font-size:12.5px;font-weight:bold;color:#231f20;-webkit-text-stroke:.75px #231f20;transform:scaleX(1.35);transform-origin:0 0;letter-spacing:1px;word-spacing:8.8px">СЕМЕЈСТВО,НЕВЛАДИНИ ОРГАНИЗАЦИИ, ВЕРСКИ ЗАЕДНИЦИ,</div>
 <div class="t" style="left:322px;top:302px;font-size:12.5px;font-weight:bold;color:#231f20;-webkit-text-stroke:.75px #231f20;transform:scaleX(1.35);transform-origin:0 0;letter-spacing:.75px;word-spacing:8.3px">ОБРАЗОВНИ ИНСТИТУЦИИ, МЕДИУМИ, ЦЕНТРИ ЗА СОЦИЈАЛНА РАБОТА,</div>
 <div class="t" style="left:322px;top:320px;font-size:12.5px;font-weight:bold;color:#231f20;-webkit-text-stroke:.75px #231f20;transform:scaleX(1.35);transform-origin:0 0;letter-spacing:.6px">ВРСНИЦИ</div>
 <div class="li a" style="left:0;top:2px">
  <div class="t" style="left:328px;top:342px">1. Да се одговори брзо (без двоумење)</div>
  <div class="t" style="left:328px;top:367px">2. Да се гледа соговорникот во очи</div>
  <div class="t" style="left:328px;top:391px">3. Да се одговори со јасно и непоколебливо „Не“ кое не остава никакви</div>
  <div class="t" style="left:327px;top:410px">двосмислености во врска со идната понуда за дрога</div>
  <div class="t" style="left:328px;top:433px">4. Да се скрати разговорот</div>
  <div class="t" style="left:328px;top:458px">5. Да се напушти ситуацијата</div>
  <div class="t" style="left:328px;top:487px">6. Најди друга причина : се брзам, имам работа, треба да одам,имам</div>
  <div class="t" style="left:309px;top:510px;letter-spacing:1.13px">тренинг , не се чуствувам добро</div>
  <div class="t" style="left:328px;top:534px;letter-spacing:1.19px">7. Предложи заедно да правите нешто друго (спорт , културна</div>
  <div class="t" style="left:309px;top:556px;letter-spacing:1.57px">манифестација)</div>
  <div class="t" style="left:328px;top:580px;letter-spacing:1.45px">8. Укажи на последиците(проблем со родителите, законска казна)</div>
  <div class="t" style="left:328px;top:602px;letter-spacing:1.35px">9. Направи шала, скрени внимание на нешто друго, промени тема на</div>
  <div class="t" style="left:309px;top:624px">разговор,</div>
  <div class="t" style="left:317px;top:647px">10. НЕ МИ ТРЕБА ДРОГА,АЛКОХОЛ, ЦИГАРИ ЗА ДА СЕ ЧУСТВУВАМ ДОБРО</div>
 </div>
 <div class="t" style="left:296px;top:718px;font-size:8.5px;font-weight:bold;color:#231f20;transform:scaleX(.84);transform-origin:0 0">Црвен крст на Република Северна Македонија</div>
</div>

</div>
<!-- v scrollbar -->
<div class="a" style="left:1197px;top:192px;width:15px;height:589px;background:#e8e9ee"></div>
<div class="a" style="left:1212px;top:192px;width:1px;height:617px;background:#e2e4e9"></div>
<div class="a" style="left:1213px;top:192px;width:44px;height:617px;background:#f5f6f8"></div>
<svg style="left:0;top:0" width="1600" height="850">
 <path d="M1200.5 207.5 l3.5-4 l3.5 4z" fill="#8a96b8"/>
 <rect x="1198" y="640" width="12" height="40" rx="6" fill="#d3d6de"/>
 <path d="M1200.5 715 l3.5 4 l3.5-4z" fill="#8a96b8"/>
 <path d="M1201 735 l3-3 l3 3z M1201 738.5 l3-3 l3 3z M1201 752 l3 3 l3-3z M1201 755.5 l3 3 l3-3z" fill="#8a96b8"/>
 <path d="M1224 203.5 h21 M1224 207 h21" stroke="#d3d6de" stroke-width="1.3"/>
 <g fill="none" stroke="#3c4a6a" stroke-width="1.2">
  <path d="M1230.5 243 h-4.5 v-11 h15 v2 M1229.5 235.5 h12 v8 h-4 M1229.5 235.5 v9 h4 m-2-2 l2 2 l-2 2"/>
  <path d="M1234.5 266 l1.8 4 h4.2 l-3.4 2.8 1.3 4.2 -3.9-2.5 -3.9 2.5 1.3-4.2 -3.4-2.8 h4.2z M1227 281 l3-3 M1229 282 l2-2"/>
  <path d="M1226 306.5 h16 M1226 314.5 h16"/><circle cx="1229" cy="306.5" r="2" fill="#f5f6f8"/><circle cx="1238" cy="314.5" r="2" fill="#f5f6f8"/>
  <path d="M1227 349 a7.5 7.5 0 1 0 2-5.5 M1227 340 v3.5 h3.5 M1234.5 345 v4.5 l3 1.5"/>
  <circle cx="1234" cy="387.5" r="7.5"/><path d="M1231.5 385.5 a2.5 2.5 0 1 1 3.5 2.3 q-1 .5-1 2 M1234 392 v.8"/>
 </g>
 <rect x="1213" y="764" width="44" height="1" fill="#e2e4e9"/>
 <g fill="none" stroke="#b9bcc4" stroke-width="1.1">
  <rect x="1227.5" y="782.5" width="5.5" height="5.5" rx="1.5"/><rect x="1235.5" y="782.5" width="5.5" height="5.5" rx="1.5"/>
  <rect x="1227.5" y="790.5" width="5.5" height="5.5" rx="1.5"/><rect x="1235.5" y="790.5" width="5.5" height="5.5" rx="1.5"/>
 </g>
</svg>
<!-- h scrollbar & notes -->
<div class="a" style="left:245px;top:766px;width:952px;height:15px;background:#e8e9ee"></div>
<svg style="left:0;top:0" width="1600" height="850">
 <path d="M257 768.5 l-4 3.5 l4 3.5z M1185 768.5 l4 3.5 l-4 3.5z" fill="#8a96b8"/>
 <rect x="334" y="767" width="773" height="12" rx="6" fill="#d5d8e0"/>
</svg>
<div class="a" style="left:245px;top:781px;width:967px;height:28px;background:#e6e6e6"></div>
<svg style="left:0;top:0" width="1600" height="850">
 <path d="M252 788.5 h16 M252 793 h16 M252 797.5 h12 M252 801 h8 M264 801 h4 M266 799 v4" fill="none" stroke="#4a5672" stroke-width="1.1"/>
</svg>
<div class="t" style="left:275px;top:786px;font-size:13.8px;color:#4a5672">Click to add notes</div>
<!-- status bar -->
<div class="a" style="left:33px;top:809px;width:1224px;height:34px;background:#f5f6f8;border-top:1px solid #e2e4e9"></div>
<div class="t" style="left:44px;top:821px;font-size:11px;color:#4a5672">Slide 21 / 22</div>
<div class="t" style="left:127px;top:821px;font-size:10.6px;color:#4a5672">Dementia Clinical Case by Slidesgo</div>
<svg style="left:0;top:0" width="1600" height="850">
 <rect x="114" y="818" width="1" height="18" fill="#dfe1e6"/>
 <rect x="306" y="818" width="1" height="18" fill="#dfe1e6"/>
 <g fill="none" stroke="#4a5672" stroke-width="1.1">
  <path d="M606.5 821.5 h11 v13 h-11z M609 821.5 v-2 h8.5 M610 826 v3.5 h3"/>
  <path d="M634.5 822 v-2.5 h10 v14 h-10 v-2.5 M631 826.5 h8 m-2-2 l2 2 l-2 2 M637 830.5 h4"/>
  <path d="M670 820.5 h13 M670 825.5 h16 M670 830.5 h16 M677 820 l2 2 l3-4"/>
  <path d="M749.5 820.5 h15 v11 h-10 l-3 3 v-3 h-2z M759 817 v6 M756 820 h6"/>
  <rect x="839.5" y="819.5" width="14" height="14"/><path d="M844 819.5 v14 M844 829 h9.5"/>
  <rect x="867.5" y="819.5" width="5.5" height="5.5"/><rect x="875.5" y="819.5" width="5.5" height="5.5"/><rect x="867.5" y="827.5" width="5.5" height="5.5"/><rect x="875.5" y="827.5" width="5.5" height="5.5"/>
  <path d="M893 820 q4-1 7 1 q3-2 7-1 v13 q-4-1-7 1 q-3-2-7-1z M900 821 v13"/>
  <path d="M988 823 v-3.5 h3.5 M998 819.5 h3.5 v3.5 M1001.5 830 v3.5 h-3.5 M991.5 833.5 h-3.5 v-3.5"/><rect x="991.5" y="822.5" width="7" height="8"/>
 </g>
 <rect x="835" y="815" width="24" height="23" rx="2" fill="#dcdfe6" opacity=".0"/>
 <path d="M735 826 l2.5 2.5 l2.5-2.5z M1034 826 l2.5 2.5 l2.5-2.5z" fill="#8a96b8"/>
 <rect x="656" y="818" width="1" height="18" fill="#dfe1e6"/>
 <rect x="917" y="818" width="1" height="18" fill="#dfe1e6"/>
 <rect x="974" y="818" width="1" height="18" fill="#dfe1e6"/>
 <rect x="931" y="814" width="32" height="25" rx="2" fill="#6a7698"/>
 <path d="M942 820.5 v12 l10-6z" fill="#fff"/>
 <path d="M1050 826.5 h12" stroke="#3c4257" stroke-width="1.8"/>
 <rect x="1075" y="826" width="152" height="1.5" fill="#d3d6de"/>
 <circle cx="1137" cy="827" r="5.5" fill="#f5f6f8" stroke="#555" stroke-width="1.3"/>
 <path d="M1235 820 v13 M1228.5 826.5 h13" stroke="#3c4257" stroke-width="1.8"/>
</svg>
<div class="a" style="left:835px;top:815px;width:23px;height:23px;border-radius:2px;background:#dcdfe6"></div>
<svg style="left:0;top:0" width="1600" height="850"><g fill="none" stroke="#4a5672" stroke-width="1.1"><rect x="839.5" y="819.5" width="14" height="14"/><path d="M844 819.5 v14 M844 829 h9.5"/></g></svg>
<div class="t" style="left:689px;top:821px;font-size:11px;color:#4a5672">Remarks</div>
<div class="t" style="left:768px;top:821px;font-size:11px;color:#4a5672">Comment</div>
<div class="t" style="left:1009px;top:821px;font-size:11px;color:#4a5672">91%</div>
<!-- frame around wps bottom -->
<div class="a" style="left:1011px;top:843px;width:251px;height:10.5px;background:#434241"></div>
<div class="a" style="left:1258px;top:716px;width:4px;height:137px;background:#434241"></div>

<!-- teams top controls -->
<svg style="left:0;top:0" width="1600" height="104">
 <rect x="1292.5" y="56" width="1" height="33" fill="#4a4a4a"/>
 <circle cx="1262" cy="73" r="2.5" fill="#c8c8c8"/>
 <!-- camera off -->
 <path d="M1323 64 h12 a2.5 2.5 0 0 1 2.5 2.5 v2.5 l4.5-3 v12 l-4.5-3 v2.5 a2.5 2.5 0 0 1-2.5 2.5 h-12 a2.5 2.5 0 0 1-2.5-2.5 v-11 a2.5 2.5 0 0 1 2.5-2.5z" fill="#fff"/>
 <line x1="1321" y1="62" x2="1342" y2="83" stroke="#1f1f1f" stroke-width="3"/>
 <line x1="1321" y1="62" x2="1342" y2="83" stroke="#fff" stroke-width="1.3"/>
 <!-- mic off -->
 <rect x="1377" y="62" width="9" height="15" rx="4.5" fill="#fff"/>
 <path d="M1374 71 v2 a7.5 7.5 0 0 0 15 0 v-2" fill="none" stroke="#fff" stroke-width="1.3"/>
 <line x1="1381.5" y1="80.5" x2="1381.5" y2="84" stroke="#fff" stroke-width="1.3"/>
 <line x1="1371" y1="62" x2="1392" y2="83" stroke="#1f1f1f" stroke-width="3"/>
 <line x1="1371" y1="62" x2="1392" y2="83" stroke="#fff" stroke-width="1.3"/>
 <!-- share -->
 <rect x="1421" y="64.5" width="21" height="16" rx="2" fill="#fff"/>
 <path d="M1431.5 78 V68 M1427.5 72 L1431.5 68 L1435.5 72" fill="none" stroke="#1f1f1f" stroke-width="1.5"/>
 <!-- leave -->
 <rect x="1470" y="56" width="108" height="33" rx="3" fill="#c4314b"/>
 <path d="M1489 73.5 c0-6 21-6 21 0 l0 2 a1.2 1.2 0 0 1-1.3 1.1 l-4-.9 a1.2 1.2 0 0 1-.9-1.1 v-1.8 c-3.5-1.5-6.5-1.5-9 0 v1.8 a1.2 1.2 0 0 1-.9 1.1 l-4 .9 a1.2 1.2 0 0 1-1.3-1.1z" fill="#fff"/>
</svg>
<div class="t" style="left:1519px;top:66px;font-size:14px;font-weight:bold;color:#fff">Leave</div>
<!-- participants panel -->
<div class="a" style="left:1259px;top:104px;width:9px;height:612px;background:#1b1b1b"></div><div class="a" style="left:1262px;top:716px;width:6px;height:142px;background:#1b1b1b"></div>
<div id="panel" class="a"></div>
<div class="a" style="left:1268px;top:166px;width:332px;height:1px;background:#1e1e1e"></div>
<div class="t" style="left:1289px;top:129px;font-size:16.5px;font-weight:bold;color:#fff">Participants</div>
<svg style="left:0;top:0" width="1600" height="860">
 <path d="M1556 130.5 L1569 143.5 M1569 130.5 L1556 143.5" stroke="#d0d0d0" stroke-width="1.2"/>
 <circle cx="1560" cy="199" r="5.5" fill="none" stroke="#fff" stroke-width="1.6"/>
 <line x1="1564" y1="203" x2="1568.5" y2="207.5" stroke="#fff" stroke-width="1.8"/>
 <path d="M1275 236 h8 l-4 5z" fill="#9a9a9a"/>
 <rect x="1588" y="222" width="7" height="355" rx="3.5" fill="#8a8a8a"/>
</svg>
<div class="t" style="left:1301px;top:193px;font-size:14.5px;color:#bdbdbd">Type a name</div>
<div class="t" style="left:1289px;top:232px;font-size:12.7px;color:#e8e8e8">In this meeting (24)</div>
<div id="plist">
<div class="a" style="left:1270px;top:779px;width:312px;height:53px;border-radius:4px;background:#3b3b3b"></div>
<svg style="left:1290px;top:268.5px" width="33" height="33"><defs><clipPath id="cp268"><circle cx="16.5" cy="16.5" r="16.5"/></clipPath></defs><g clip-path="url(#cp268)"><rect width="33" height="33" fill="#d6d2ca"/><rect width="9" height="33" fill="#8a6a48"/><ellipse cx="16" cy="9" rx="6" ry="5" fill="#3a3a3a"/><ellipse cx="15.5" cy="14" rx="5" ry="5" fill="#c89878"/><path d="M2 33 Q4 20 12 19 h10 Q28 22 28 33z" fill="#2a5aa8"/><rect x="12" y="14" width="7" height="11" rx="1" fill="#1a1a1a"/><ellipse cx="15" cy="24" rx="5" ry="3" fill="#c89070"/></g></svg>
<svg style="left:1311.0px;top:289.0px" width="13" height="13"><circle cx="6.5" cy="6.5" r="6.5" fill="#292929"/><circle cx="6.5" cy="6.5" r="5" fill="#c4314b"/></svg>
<div class="t nm" style="left:1332px;top:279.0px">Алекс Ристовски</div>
<svg style="left:1544px;top:275px" width="20" height="20"><rect x="6.5" y="1" width="7" height="11" rx="3.5" fill="none" stroke="#d8d8d8" stroke-width="1.2"/><path d="M3.5 8.5 v1 a6.5 6.5 0 0 0 13 0 v-1 M10 16 v3" fill="none" stroke="#d8d8d8" stroke-width="1.2"/><line x1="2" y1="1.5" x2="18.5" y2="18" stroke="#292929" stroke-width="2.6"/><line x1="2" y1="1.5" x2="18.5" y2="18" stroke="#d8d8d8" stroke-width="1.2"/></svg>
<div class="a av" style="left:1290px;top:320.5px;background:#d5dde4"></div>
<div class="t" style="left:1290px;top:330px;width:33px;text-align:center;font-size:15px;color:#21495a">АА</div>
<svg style="left:1311.0px;top:341.0px" width="13" height="13"><circle cx="6.5" cy="6.5" r="6.5" fill="#292929"/><circle cx="6.5" cy="6.5" r="5" fill="#c4314b"/></svg>
<div class="t nm" style="left:1332px;top:331.0px">Александар Ацески</div>
<svg style="left:1544px;top:327px" width="20" height="20"><rect x="6.5" y="1" width="7" height="11" rx="3.5" fill="none" stroke="#d8d8d8" stroke-width="1.2"/><path d="M3.5 8.5 v1 a6.5 6.5 0 0 0 13 0 v-1 M10 16 v3" fill="none" stroke="#d8d8d8" stroke-width="1.2"/><line x1="2" y1="1.5" x2="18.5" y2="18" stroke="#292929" stroke-width="2.6"/><line x1="2" y1="1.5" x2="18.5" y2="18" stroke="#d8d8d8" stroke-width="1.2"/></svg>
<svg style="left:1290px;top:372.5px" width="33" height="33"><defs><clipPath id="cp372"><circle cx="16.5" cy="16.5" r="16.5"/></clipPath></defs><g clip-path="url(#cp372)"><rect width="33" height="33" fill="#241414"/><path d="M0 16 Q4 2 17 2 Q30 2 33 16z" fill="#7a2626"/><path d="M5 33 Q6 16 17 14 Q28 16 28 33z" fill="#1a1010"/><ellipse cx="16" cy="24" rx="7" ry="8" fill="#e6dede"/><path d="M9 18 h14 v3 h-14z" fill="#1a1010"/></g></svg>
<svg style="left:1311.0px;top:393.0px" width="13" height="13"><circle cx="6.5" cy="6.5" r="6.5" fill="#292929"/><circle cx="6.5" cy="6.5" r="4.8" fill="none" stroke="#a8a8a8" stroke-width="1"/><path d="M4.8 4.8 l3.4 3.4 M8.2 4.8 l-3.4 3.4" stroke="#a8a8a8" stroke-width="1"/></svg>
<div class="t nm" style="left:1332px;top:383.0px">Александар Ќосев</div>
<svg style="left:1544px;top:379px" width="20" height="20"><rect x="6.5" y="1" width="7" height="11" rx="3.5" fill="none" stroke="#d8d8d8" stroke-width="1.2"/><path d="M3.5 8.5 v1 a6.5 6.5 0 0 0 13 0 v-1 M10 16 v3" fill="none" stroke="#d8d8d8" stroke-width="1.2"/><line x1="2" y1="1.5" x2="18.5" y2="18" stroke="#292929" stroke-width="2.6"/><line x1="2" y1="1.5" x2="18.5" y2="18" stroke="#d8d8d8" stroke-width="1.2"/></svg>
<svg style="left:1290px;top:424.5px" width="33" height="33"><defs><clipPath id="cp424"><circle cx="16.5" cy="16.5" r="16.5"/></clipPath></defs><g clip-path="url(#cp424)"><rect width="33" height="33" fill="#141414"/><path d="M17 12 L2 2 L6 16z M17 12 L33 4 L29 17z M17 12 L14 0 h8z" fill="#c8c8c8"/><circle cx="17" cy="12" r="5" fill="#f0f0f0"/><path d="M6 22 h21 M8 25 h17 M7 28 h19" stroke="#9a9a9a" stroke-width="1.3" stroke-dasharray="2 1"/></g></svg>
<svg style="left:1311.0px;top:445.0px" width="13" height="13"><circle cx="6.5" cy="6.5" r="6.5" fill="#292929"/><circle cx="6.5" cy="6.5" r="4.8" fill="none" stroke="#a8a8a8" stroke-width="1"/><path d="M4.8 4.8 l3.4 3.4 M8.2 4.8 l-3.4 3.4" stroke="#a8a8a8" stroke-width="1"/></svg>
<div class="t nm" style="left:1332px;top:435.0px">Александра Пекевска</div>
<svg style="left:1544px;top:431px" width="20" height="20"><rect x="6.5" y="1" width="7" height="11" rx="3.5" fill="none" stroke="#d8d8d8" stroke-width="1.2"/><path d="M3.5 8.5 v1 a6.5 6.5 0 0 0 13 0 v-1 M10 16 v3" fill="none" stroke="#d8d8d8" stroke-width="1.2"/><line x1="2" y1="1.5" x2="18.5" y2="18" stroke="#292929" stroke-width="2.6"/><line x1="2" y1="1.5" x2="18.5" y2="18" stroke="#d8d8d8" stroke-width="1.2"/></svg>
<svg style="left:1290px;top:476.5px" width="33" height="33"><defs><clipPath id="cp476"><circle cx="16.5" cy="16.5" r="16.5"/></clipPath></defs><g clip-path="url(#cp476)"><rect width="33" height="33" fill="#e0cc98"/><ellipse cx="15" cy="14" rx="9" ry="8" fill="#f8f6f0"/><ellipse cx="9" cy="17" rx="3" ry="6" fill="#222"/><ellipse cx="17" cy="10" rx="4" ry="2.5" fill="#a070c8"/><path d="M10 33 Q12 22 20 22 Q30 22 32 33z" fill="#e070b0"/></g></svg>
<svg style="left:1311.0px;top:497.0px" width="13" height="13"><circle cx="6.5" cy="6.5" r="6.5" fill="#292929"/><circle cx="6.5" cy="6.5" r="5" fill="#c4314b"/></svg>
<div class="t nm" style="left:1332px;top:487.0px">Ана Стојчева</div>
<svg style="left:1544px;top:483px" width="20" height="20"><rect x="6.5" y="1" width="7" height="11" rx="3.5" fill="none" stroke="#d8d8d8" stroke-width="1.2"/><path d="M3.5 8.5 v1 a6.5 6.5 0 0 0 13 0 v-1 M10 16 v3" fill="none" stroke="#d8d8d8" stroke-width="1.2"/><line x1="2" y1="1.5" x2="18.5" y2="18" stroke="#292929" stroke-width="2.6"/><line x1="2" y1="1.5" x2="18.5" y2="18" stroke="#d8d8d8" stroke-width="1.2"/></svg>
<svg style="left:1290px;top:528.5px" width="33" height="33"><defs><clipPath id="cp528"><circle cx="16.5" cy="16.5" r="16.5"/></clipPath></defs><g clip-path="url(#cp528)"><rect width="33" height="33" fill="#e6e2d0"/><path d="M5 30 L22 2 M10 33 L28 5 M14 33 L30 12" stroke="#c8a040" stroke-width="2"/><path d="M3 20 L20 6 M8 28 L26 16" stroke="#70a060" stroke-width="1.5"/><path d="M6 12 L16 28 M20 30 L30 20" stroke="#c84848" stroke-width="1"/></g></svg>
<svg style="left:1311.0px;top:549.0px" width="13" height="13"><circle cx="6.5" cy="6.5" r="6.5" fill="#292929"/><circle cx="6.5" cy="6.5" r="5" fill="#c4314b"/></svg>
<div class="t nm" style="left:1332px;top:539.0px">Андреј Божаров</div>
<svg style="left:1544px;top:535px" width="20" height="20"><rect x="6.5" y="1" width="7" height="11" rx="3.5" fill="none" stroke="#d8d8d8" stroke-width="1.2"/><path d="M3.5 8.5 v1 a6.5 6.5 0 0 0 13 0 v-1 M10 16 v3" fill="none" stroke="#d8d8d8" stroke-width="1.2"/><line x1="2" y1="1.5" x2="18.5" y2="18" stroke="#292929" stroke-width="2.6"/><line x1="2" y1="1.5" x2="18.5" y2="18" stroke="#d8d8d8" stroke-width="1.2"/></svg>
<svg style="left:1290px;top:580.5px" width="33" height="33"><defs><clipPath id="cp580"><circle cx="16.5" cy="16.5" r="16.5"/></clipPath></defs><g clip-path="url(#cp580)"><rect width="33" height="33" fill="#48222a"/><ellipse cx="16" cy="17" rx="7" ry="5" fill="#2a1818"/><circle cx="12" cy="16" r="2" fill="#d8c0a0"/><circle cx="19" cy="16" r="2" fill="#d8c0a0"/><path d="M11 9 h10 v4 h-10z" fill="#6a3838"/></g></svg>
<svg style="left:1311.0px;top:601.0px" width="13" height="13"><circle cx="6.5" cy="6.5" r="6.5" fill="#292929"/><circle cx="6.5" cy="6.5" r="5" fill="#c4314b"/></svg>
<div class="t nm" style="left:1332px;top:591.0px">Аника Донева</div>
<svg style="left:1544px;top:587px" width="20" height="20"><rect x="6.5" y="1" width="7" height="11" rx="3.5" fill="none" stroke="#d8d8d8" stroke-width="1.2"/><path d="M3.5 8.5 v1 a6.5 6.5 0 0 0 13 0 v-1 M10 16 v3" fill="none" stroke="#d8d8d8" stroke-width="1.2"/><line x1="2" y1="1.5" x2="18.5" y2="18" stroke="#292929" stroke-width="2.6"/><line x1="2" y1="1.5" x2="18.5" y2="18" stroke="#d8d8d8" stroke-width="1.2"/></svg>
<div class="a av" style="left:1290px;top:632.5px;background:#dcdaf0"></div>
<div class="t" style="left:1290px;top:642px;width:33px;text-align:center;font-size:14px;color:#3c3a78">БА</div>
<svg style="left:1311.0px;top:653.0px" width="13" height="13"><circle cx="6.5" cy="6.5" r="6.5" fill="#292929"/><circle cx="6.5" cy="6.5" r="5" fill="#92c353"/><path d="M4 6.7 l1.8 1.8 l3.3-3.4" fill="none" stroke="#292929" stroke-width="1.2"/></svg>
<div class="t nm" style="left:1332px;top:643.0px">Борис Апостолов</div>
<svg style="left:1544px;top:639px" width="20" height="20"><rect x="6.5" y="1" width="7" height="11" rx="3.5" fill="none" stroke="#d8d8d8" stroke-width="1.2"/><path d="M3.5 8.5 v1 a6.5 6.5 0 0 0 13 0 v-1 M10 16 v3" fill="none" stroke="#d8d8d8" stroke-width="1.2"/><line x1="2" y1="1.5" x2="18.5" y2="18" stroke="#292929" stroke-width="2.6"/><line x1="2" y1="1.5" x2="18.5" y2="18" stroke="#d8d8d8" stroke-width="1.2"/></svg>
<svg style="left:1290px;top:684.5px" width="33" height="33"><defs><clipPath id="cp684"><circle cx="16.5" cy="16.5" r="16.5"/></clipPath></defs><g clip-path="url(#cp684)"><rect width="33" height="33" fill="#c8bcb0"/><path d="M2 33 Q0 10 16 5 Q30 6 31 20 Q32 30 28 33z" fill="#3c2418"/><ellipse cx="18" cy="17" rx="7.5" ry="9" fill="#e2b294"/><path d="M10 33 Q14 26 20 27 Q26 28 26 33z" fill="#5a3a30"/></g></svg>
<svg style="left:1311.0px;top:705.0px" width="13" height="13"><circle cx="6.5" cy="6.5" r="6.5" fill="#292929"/><circle cx="6.5" cy="6.5" r="5" fill="#c4314b"/></svg>
<div class="t nm" style="left:1332px;top:695.0px">Јасмина Драгеска</div>
<svg style="left:1544px;top:691px" width="20" height="20"><rect x="6.5" y="1" width="7" height="11" rx="3.5" fill="none" stroke="#d8d8d8" stroke-width="1.2"/><path d="M3.5 8.5 v1 a6.5 6.5 0 0 0 13 0 v-1 M10 16 v3" fill="none" stroke="#d8d8d8" stroke-width="1.2"/><line x1="2" y1="1.5" x2="18.5" y2="18" stroke="#292929" stroke-width="2.6"/><line x1="2" y1="1.5" x2="18.5" y2="18" stroke="#d8d8d8" stroke-width="1.2"/></svg>
<div class="a av" style="left:1290px;top:736.5px;background:#ecdcdc"></div>
<div class="t" style="left:1290px;top:746px;width:33px;text-align:center;font-size:14px;color:#7a2a30">ЛЦ</div>
<svg style="left:1311.0px;top:757.0px" width="13" height="13"><circle cx="6.5" cy="6.5" r="6.5" fill="#292929"/><circle cx="6.5" cy="6.5" r="5" fill="#92c353"/><path d="M4 6.7 l1.8 1.8 l3.3-3.4" fill="none" stroke="#292929" stroke-width="1.2"/></svg>
<div class="t nm" style="left:1332px;top:747.0px">Лора Целовска</div>
<svg style="left:1544px;top:743px" width="20" height="20"><rect x="6.5" y="1" width="7" height="11" rx="3.5" fill="none" stroke="#d8d8d8" stroke-width="1.2"/><path d="M3.5 8.5 v1 a6.5 6.5 0 0 0 13 0 v-1 M10 16 v3" fill="none" stroke="#d8d8d8" stroke-width="1.2"/><line x1="2" y1="1.5" x2="18.5" y2="18" stroke="#292929" stroke-width="2.6"/><line x1="2" y1="1.5" x2="18.5" y2="18" stroke="#d8d8d8" stroke-width="1.2"/></svg>
<svg style="left:1290px;top:788.5px" width="33" height="33"><defs><clipPath id="cp788"><circle cx="16.5" cy="16.5" r="16.5"/></clipPath></defs><g clip-path="url(#cp788)"><rect width="33" height="33" fill="#fafafa"/><path d="M10 30 Q8 18 16 14 Q22 10 26 16 Q28 24 24 30z" fill="#c8783a"/><circle cx="21" cy="13" r="4" fill="#b86a30"/><path d="M6 14 l4 -3 l2 6z" fill="#e8c030"/><path d="M14 31 h12" stroke="#888" stroke-width="2"/></g></svg>
<svg style="left:1311.0px;top:809.0px" width="13" height="13"><circle cx="6.5" cy="6.5" r="6.5" fill="#3b3b3b"/><circle cx="6.5" cy="6.5" r="5" fill="#c4314b"/></svg>
<div class="t nm" style="left:1332px;top:799.0px">Лука Војнески</div>
<div class="t" style="left:1537px;top:796.0px;font-size:18px;font-weight:bold;color:#d0d0d0;letter-spacing:0px">···</div>
<svg style="left:1290px;top:840.5px" width="33" height="33"><defs><clipPath id="cp840"><circle cx="16.5" cy="16.5" r="16.5"/></clipPath></defs><g clip-path="url(#cp840)"><rect width="33" height="33" fill="#0c121a"/><path d="M14 4 Q18 2 20 8 Q22 18 17 24 Q12 18 14 4z" fill="#2a6a98"/><circle cx="17" cy="9" r="2.5" fill="#5ab8e8"/></g></svg>
<div class="t nm" style="left:1332px;top:851.0px">Лука Галевски</div>
<svg style="left:1544px;top:847px" width="20" height="20"><rect x="6.5" y="1" width="7" height="11" rx="3.5" fill="none" stroke="#d8d8d8" stroke-width="1.2"/><path d="M3.5 8.5 v1 a6.5 6.5 0 0 0 13 0 v-1 M10 16 v3" fill="none" stroke="#d8d8d8" stroke-width="1.2"/><line x1="2" y1="1.5" x2="18.5" y2="18" stroke="#292929" stroke-width="2.6"/><line x1="2" y1="1.5" x2="18.5" y2="18" stroke="#d8d8d8" stroke-width="1.2"/></svg>
</div>
<div id="taskbar" class="a"></div>
<div class="a" style="left:0;top:858px;width:50px;height:42px;background:#36342a"></div>
<svg style="left:0;top:858px" width="50" height="42">
 <path d="M16 14.5 L24 13.3 V20.5 H16z M25 13.1 L33 12 V20.5 H25z M16 21.5 H24 V28.7 L16 27.5z M25 21.5 H33 V30 L25 28.9z" fill="#fff"/>
</svg>
<div class="a" style="left:50px;top:858px;width:358px;height:42px;background:#f0f0f0;border-bottom:1px solid #cfcfcf"></div>
<svg style="left:50px;top:858px" width="40" height="42">
 <circle cx="21" cy="18" r="6.5" fill="none" stroke="#1a1a1a" stroke-width="1.4"/>
 <line x1="16.5" y1="22.5" x2="12" y2="27" stroke="#1a1a1a" stroke-width="1.6"/>
</svg>
<div class="t" style="left:92px;top:871px;font-size:15.5px;color:#2a2a2a">Type here to search</div>
<svg style="left:0;top:858px" width="1600" height="42">
 <circle cx="433" cy="21.5" r="8" fill="none" stroke="#fff" stroke-width="2"/>
 <path d="M475 12.5 h10 M475 31 h10 M477 15.5 v13 M483 15.5 v13 M475 15.5 h10 v13 h-10z" fill="none" stroke="#e8e8e8" stroke-width="1.3"/>
 <path d="M490 12 v19 M488 18 h4" stroke="#e8e8e8" stroke-width="1.3"/>
 <!-- underlines -->
 <rect x="516" y="40" width="38" height="2" fill="#c8c0b8"/>
 <rect x="563" y="40" width="38" height="2" fill="#c8c0b8"/>
 <rect x="611" y="40" width="38" height="2" fill="#c8c0b8"/>
 <rect x="991" y="40" width="38" height="2" fill="#c8c0b8"/>
 <rect x="1034" y="40" width="47" height="2" fill="#c8c0b8"/>
 <rect x="1081" y="40" width="47" height="2" fill="#f07a20"/>
 <rect x="1133" y="40" width="38" height="2" fill="#c8c0b8"/>
 <!-- chrome -->
 <circle cx="534" cy="21" r="11.5" fill="#db4437"/>
 <path d="M534 21 L524 27 A11.5 11.5 0 0 0 540 31.3z" fill="#0f9d58"/>
 <path d="M534 21 L545.5 21 A11.5 11.5 0 0 1 540 31.3z" fill="#f4b400"/>
 <circle cx="534" cy="21" r="5" fill="#fff"/><circle cx="534" cy="21" r="4" fill="#4285f4"/>
 <circle cx="540" cy="27" r="6.5" fill="#b8b0a0"/><circle cx="540" cy="27" r="4" fill="#e0a040"/>
 <!-- explorer -->
 <path d="M571 13 h8 l2 2 h12 v15 h-22z" fill="#f8c83a"/>
 <rect x="571" y="17" width="22" height="13" fill="#fcd75a"/>
 <path d="M577 30 v-6 h11 v6" fill="none" stroke="#2a88d8" stroke-width="2.5"/>
 <!-- mail -->
 <path d="M617 16 L630 9 L643 16 V33 H617z" fill="#1065c0"/>
 <path d="M617 17 L630 24 L643 17 V33 H617z" fill="#2ba0e8"/>
 <path d="M620 15.5 h20 v3 l-10 6 l-10-6z" fill="#f4f4f4"/>
 <path d="M617 33 L630 24.5 L643 33z" fill="#40b8f4"/>
 <!-- winamp -->
 <path d="M668 20 L677 10 L688 19 L678 31z" fill="#f4f4f4"/>
 <path d="M683 12 L672 22 L679 22 L671 32 L685 19 L678 19z" fill="#f0a020" stroke="#222" stroke-width=".8"/>
 <!-- store -->
 <rect x="713" y="15" width="24" height="18" rx="2" fill="#f8f8f8"/>
 <path d="M719 15 v-3 a3 3 0 0 1 3-3 h6 a3 3 0 0 1 3 3 v3" fill="none" stroke="#28a8e0" stroke-width="1.6"/>
 <rect x="721" y="19" width="3.5" height="3.5" fill="#f25022"/><rect x="725.5" y="19" width="3.5" height="3.5" fill="#7fba00"/>
 <rect x="721" y="23.5" width="3.5" height="3.5" fill="#00a4ef"/><rect x="725.5" y="23.5" width="3.5" height="3.5" fill="#ffb900"/>
 <!-- qb -->
 <circle cx="772" cy="20.5" r="12.5" fill="#3b78c8"/>
 <text x="772" y="26" font-size="15" fill="#e8f0ff" text-anchor="middle" font-family="Liberation Sans">qb</text>
 <!-- Ai -->
 <rect x="808.5" y="9.5" width="23" height="22" fill="#2e1f00" stroke="#f0a020" stroke-width="1.5"/>
 <text x="820" y="26" font-size="14" font-weight="bold" fill="#f7a030" text-anchor="middle" font-family="Liberation Sans">Ai</text>
 <!-- spotify -->
 <circle cx="867" cy="20.5" r="12" fill="#1ed760"/>
 <path d="M860 16.5 q8-3 15 1 M861 20.5 q6.5-2.5 12.5 .8 M862 24 q5-2 10 .6" fill="none" stroke="#121212" stroke-width="1.8" stroke-linecap="round"/>
 <!-- photo star -->
 <rect x="904" y="9" width="22" height="22" rx="2" fill="#6a6a6a"/>
 <rect x="907" y="16" width="16" height="13" fill="#1a1a1a"/>
 <path d="M915 18 l1.3 3 h3 l-2.4 1.8 .9 3 -2.8-1.8 -2.8 1.8 .9-3 -2.4-1.8 h3z" fill="#f0c020"/>
 <!-- scanner -->
 <path d="M952 12 h14 l3 6 h-20z" fill="#505050"/>
 <rect x="951" y="18" width="17" height="9" fill="#cfd8e0"/>
 <rect x="951" y="21" width="17" height="2" fill="#40a0e0"/>
 <rect x="963" y="22" width="11" height="11" fill="#e8e8e0"/>
 <!-- teams -->
 <defs>
  <linearGradient id="edg" x1="0" y1="0" x2="1" y2="1"><stop offset="0" stop-color="#1fb3e8"/><stop offset=".55" stop-color="#0f7bd0"/><stop offset="1" stop-color="#0a5fae"/></linearGradient>
  <linearGradient id="edg2" x1="0" y1="0" x2="1" y2="0"><stop offset="0" stop-color="#2bb4c8"/><stop offset="1" stop-color="#6fd858"/></linearGradient>
 </defs>
 <circle cx="1011" cy="13.5" r="3.8" fill="#7b83eb"/>
 <circle cx="1018.5" cy="14.8" r="2.6" fill="#5059c9"/>
 <path d="M1006 19 h14 v7 a7 7 0 0 1-14 0z" fill="#7b83eb"/>
 <path d="M1015 19 h7 v6 a4 4 0 0 1-7 0z" fill="#5059c9"/>
 <rect x="997" y="15" width="12.5" height="12.5" rx="1.3" fill="#4b53bc"/>
 <text x="1003.2" y="25.5" font-size="10" font-weight="bold" fill="#fff" text-anchor="middle" font-family="Liberation Sans">T</text>
 <circle cx="1017.5" cy="28" r="5.2" fill="#c50f1f" stroke="#f0f0f0" stroke-width="1.2"/>
 <!-- wps -->
 <rect x="1034" y="0" width="47" height="40" fill="#46474b"/>
 <rect x="1045" y="9" width="25" height="24" fill="#1f3766"/>
 <path d="M1057 12 l7 4 v8 l-7 4 l-7-4 v-8z" fill="#2f7de1"/>
 <path d="M1052.5 17 l2 6 l2.5-4 l2.5 4 l2-6" fill="none" stroke="#fff" stroke-width="1.3"/>
 <rect x="1060" y="22" width="8.5" height="10" rx="1.2" fill="#f88c4a"/>
 <path d="M1062.5 30 v-6 h3 a1.6 1.6 0 0 1 0 3.2 h-3" fill="none" stroke="#fff" stroke-width="1"/>
 <!-- word -->
 <rect x="1081" y="0" width="47" height="40" fill="#935a2c"/>
 <rect x="1097.5" y="10" width="18.5" height="5.5" fill="#41a5ee"/>
 <rect x="1097.5" y="15.5" width="18.5" height="5.5" fill="#2b7cd3"/>
 <rect x="1097.5" y="21" width="18.5" height="5.5" fill="#185abd"/>
 <rect x="1097.5" y="26.5" width="18.5" height="5.5" fill="#103f91"/>
 <rect x="1091.5" y="14.5" width="12.5" height="12.5" rx="1" fill="#185abd"/>
 <text x="1097.7" y="24.5" font-size="9.5" font-weight="bold" fill="#fff" text-anchor="middle" font-family="Liberation Sans">W</text>
 <!-- edge -->
 <circle cx="1151.5" cy="21" r="12.5" fill="url(#edg)"/>
 <path d="M1139.5 19 a12.5 12.5 0 0 1 24.5 1.5 c0 4-3 6.5-7 6.5 c-4 0-6-2-6-4.5 c0-2 1.5-3 1.5-3 c-5-1-10 1-13 -0.5z" fill="url(#edg2)"/>
 <ellipse cx="1150" cy="22.5" rx="3" ry="2.5" fill="#0f3f6e"/>
 <!-- tray -->
 <path d="M1209 30 a4.5 4.5 0 0 1 .5-9 a6.5 6.5 0 0 1 12.5-2 a5.5 5.5 0 0 1 3.5 11z" fill="#cde8ff"/>
 <path d="M1285 25 L1291 19 L1297 25" fill="none" stroke="#e8e8e8" stroke-width="1.3"/>
 <rect x="1312" y="16" width="8" height="11" rx="2" fill="none" stroke="#e0e0e0" stroke-width="1.2"/>
 <path d="M1320 19 l3-2 v9 l-3-2" fill="none" stroke="#e0e0e0" stroke-width="1.2"/>
 <path d="M1336 29 a13 13 0 0 1 13-13 M1339.5 29 a9.5 9.5 0 0 1 9.5-9.5 M1343 29 a6 6 0 0 1 6-6" fill="none" stroke="#e0e0e0" stroke-width="1.2"/>
 <circle cx="1347.5" cy="28" r="1.2" fill="#e0e0e0"/>
 <rect x="1362" y="13" width="7" height="12" rx="3.5" fill="#f0f0f0"/>
 <path d="M1360 22 a5.5 5.5 0 0 0 11 0 M1365.5 27.5 v3" fill="none" stroke="#f0f0f0" stroke-width="1.2"/>
 <path d="M1382 18 h3 l4-4 v14 l-4-4 h-3z" fill="none" stroke="#e8e8e8" stroke-width="1.2"/>
 <path d="M1392 18 a4 4 0 0 1 0 6 M1395 15.5 a7.5 7.5 0 0 1 0 11 M1398 13 a11 11 0 0 1 0 16" fill="none" stroke="#e8e8e8" stroke-width="1.2"/>
 <path d="M1414 30 l11-13 a2 2 0 0 0-3-3 l-10 12 -1 4z M1418 22 c3 1 6 0 8 -2" fill="none" stroke="#e0e0e0" stroke-width="1.2"/>
 <path d="M1559 13.5 h15 v11 h-8 l-3 3 v-3 h-4z" fill="none" stroke="#f0f0f0" stroke-width="1.2"/>
 <rect x="1595" y="0" width="1" height="42" fill="#5a5a50"/>
</svg>
<div class="t" style="left:1237px;top:872px;font-size:14px;color:#fff">36°F</div>
<div class="t" style="left:1443px;top:873px;font-size:12px;color:#fff">ENG</div>
<div class="t" style="left:1487px;top:865px;font-size:12px;color:#fff">8:41 AM</div>
<div class="t" style="left:1481px;top:883px;font-size:12px;color:#fff">13-Dec-21</div>

</body></html>
